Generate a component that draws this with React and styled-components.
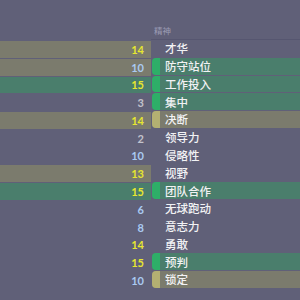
import React from "react";
import styled, { createGlobalStyle } from "styled-components";

const Global = createGlobalStyle`
  html, body { margin: 0; padding: 0; background: #606078; }
  body { width: 300px; height: 300px; overflow: hidden; }
`;

const ROW_H = 16.77;

const Page = styled.div`
  width: 300px;
  height: 300px;
  background: #606078;
  display: grid;
  grid-template-columns: 151px 149px;
  overflow: hidden;
  font-family: "Lato", "Noto Sans CJK SC", sans-serif;
`;

const Panel = styled.div`
  display: flex;
  flex-direction: column;
`;

const Header = styled.div`
  height: 40px;
  box-sizing: border-box;
  display: flex;
  align-items: flex-end;
  padding: 0 0 3px 3px;
  font-family: "Noto Sans CJK SC", sans-serif;
  font-size: 8.5px;
  color: #9c9cb4;
  border-bottom: ${(p) => (p.$line ? "1px solid #565670" : "none")};
`;

const List = styled.div`
  display: flex;
  flex-direction: column;
  gap: 1px;
  padding-top: ${(p) => p.$top}px;
`;

const bg = { olive: "#7b7b6d", green: "#4a7e6c", none: "transparent" };
const mark = { olive: "#b3b072", green: "#2eae68", none: "transparent" };

const ValueRow = styled.div`
  height: ${ROW_H}px;
  background: ${(p) => bg[p.$hl]};
  display: flex;
  align-items: center;
  justify-content: flex-end;
  padding-right: 7px;
  box-sizing: border-box;
`;

const numColor = { high: "#e6e630", mid: "#a9caf2", low: "#c3c3cc" };

const Num = styled.span`
  font-family: "Lato", sans-serif;
  font-weight: 700;
  font-size: 11px;
  color: ${(p) => numColor[p.$tier]};
`;

const LabelRow = styled.div`
  height: ${ROW_H}px;
  display: flex;
  align-items: stretch;
  background: ${(p) => bg[p.$hl]};
  margin-left: 1px;
  border-radius: 4px 0 0 4px;
`;

const Marker = styled.div`
  width: 8px;
  background: ${(p) => mark[p.$hl]};
  border-radius: 4px 0 0 4px;
  flex: none;
`;

const Label = styled.span`
  display: flex;
  align-items: center;
  padding-left: 5px;
  font-family: "Noto Sans CJK SC", sans-serif;
  font-weight: 500;
  font-size: 11.5px;
  color: #f2f2f4;
`;

const values = [
  [14, "olive"], [10, "olive"], [15, "green"], [3, "none"], [14, "olive"],
  [2, "none"], [10, "none"], [13, "olive"], [15, "green"], [6, "none"],
  [8, "none"], [14, "none"], [15, "none"], [10, "none"],
];

const labels = [
  ["才华", "none"], ["防守站位", "green"], ["工作投入", "green"], ["集中", "green"],
  ["决断", "olive"], ["领导力", "none"], ["侵略性", "none"], ["视野", "none"],
  ["团队合作", "green"], ["无球跑动", "none"], ["意志力", "none"], ["勇敢", "none"],
  ["预判", "green"], ["锁定", "olive"],
];

const tier = (v) => (v >= 13 ? "high" : v >= 6 ? "mid" : "low");

export default function App() {
  return (
    <>
      <Global />
      <Page>
        <Panel>
          <Header />
          <List $top={1}>
            {values.map(([v, hl], i) => (
              <ValueRow key={i} $hl={hl}>
                <Num $tier={tier(v)}>{v}</Num>
              </ValueRow>
            ))}
          </List>
        </Panel>
        <Panel>
          <Header $line>精神</Header>
          <List $top={0}>
            {labels.map(([t, hl], i) => (
              <LabelRow key={i} $hl={hl}>
                <Marker $hl={hl} />
                <Label>{t}</Label>
              </LabelRow>
            ))}
          </List>
        </Panel>
      </Page>
    </>
  );
}
